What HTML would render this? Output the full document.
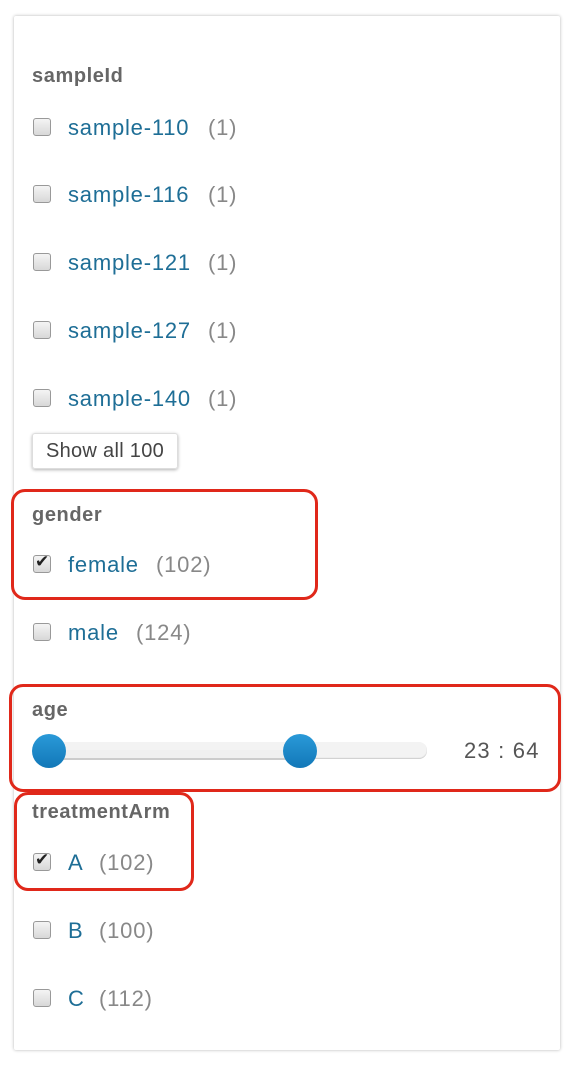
<!DOCTYPE html>
<html><head><style>
body{margin:0;width:576px;height:1066px;background:#fff;font-family:"Liberation Sans",sans-serif;position:relative;overflow:hidden}
.card{position:absolute;left:14px;top:16px;width:546px;height:1034px;background:#fff;box-shadow:0 0 3px rgba(0,0,0,.3);border-radius:2px}
.a{position:absolute;white-space:nowrap}
.h{font-weight:bold;color:#666;font-size:20px;left:32px;letter-spacing:0.6px}
.cb{position:absolute;left:33px;width:16px;height:16px;border:1px solid #999;border-radius:3px;background:linear-gradient(#f4f4f4,#d8d8d8)}
.t{color:#1e6e96;font-size:22px;left:68px;letter-spacing:0.8px}
.c{color:#888;font-size:22px;letter-spacing:0.8px}
.red{position:absolute;border:3px solid #e0281a;border-radius:14px}
</style></head><body>
<div class="card"></div>
<div class="a h" style="top:65px">sampleId</div>

<div class="cb" style="top:118px"></div><div class="a t" style="top:115px">sample-110</div><div class="a c" style="left:208px;top:115px">(1)</div>
<div class="cb" style="top:185px"></div><div class="a t" style="top:182px">sample-116</div><div class="a c" style="left:208px;top:182px">(1)</div>
<div class="cb" style="top:253px"></div><div class="a t" style="top:250px">sample-121</div><div class="a c" style="left:208px;top:250px">(1)</div>
<div class="cb" style="top:321px"></div><div class="a t" style="top:318px">sample-127</div><div class="a c" style="left:208px;top:318px">(1)</div>
<div class="cb" style="top:389px"></div><div class="a t" style="top:386px">sample-140</div><div class="a c" style="left:208px;top:386px">(1)</div>

<div class="a" style="left:32px;top:433px;width:144px;height:34px;border:1px solid #ddd;border-radius:3px;box-shadow:0 1px 3px rgba(0,0,0,.3);font-size:20px;color:#444;line-height:34px;text-align:center;letter-spacing:0.3px">Show all 100</div>

<div class="a h" style="top:504px">gender</div>
<div class="cb" style="top:555px"></div><div class="a" style="left:35px;top:552px;font-size:17px;color:#222">✔</div>
<div class="a t" style="top:552px">female</div><div class="a c" style="left:156px;top:552px">(102)</div>
<div class="cb" style="top:623px"></div><div class="a t" style="top:620px">male</div><div class="a c" style="left:136px;top:620px">(124)</div>

<div class="a h" style="top:699px">age</div>
<div class="a" style="left:50px;top:742px;width:377px;height:17px;border-radius:8px;background:#f3f3f3;box-shadow:inset 0 -1px 1px #ccc"></div>
<div class="a" style="left:50px;top:750px;width:250px;height:8px;background:#f0f0f0;border-bottom:2px solid #ccc"></div>
<div class="a" style="left:32px;top:734px;width:34px;height:34px;border-radius:50%;background:linear-gradient(#2a9ad8,#1278b8)"></div>
<div class="a" style="left:283px;top:734px;width:34px;height:34px;border-radius:50%;background:linear-gradient(#2a9ad8,#1278b8)"></div>
<div class="a" style="left:464px;top:738px;font-size:22px;color:#555;letter-spacing:1.2px">23 : 64</div>

<div class="a h" style="top:801px">treatmentArm</div>
<div class="cb" style="top:853px"></div><div class="a" style="left:35px;top:850px;font-size:17px;color:#222">✔</div>
<div class="a t" style="top:850px">A</div><div class="a c" style="left:99px;top:850px">(102)</div>
<div class="cb" style="top:921px"></div><div class="a t" style="top:918px">B</div><div class="a c" style="left:99px;top:918px">(100)</div>
<div class="cb" style="top:989px"></div><div class="a t" style="top:986px">C</div><div class="a c" style="left:99px;top:986px">(112)</div>

<div class="red" style="left:11px;top:489px;width:301px;height:105px"></div>
<div class="red" style="left:9px;top:684px;width:546px;height:102px"></div>
<div class="red" style="left:14px;top:792px;width:174px;height:93px"></div>
</body></html>
